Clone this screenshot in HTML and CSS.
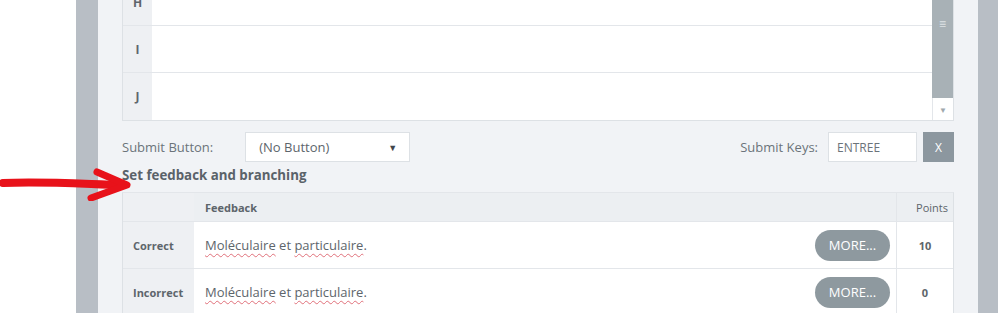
FILE: index.html
```html
<!DOCTYPE html>
<html lang="fr">
<head>
    <meta charset="UTF-8">
    <title>Question properties</title>
    <link rel="stylesheet" href="styles.css">
</head>
<body>
    <div class="stage">
        <div class="band"></div>

        <div class="panel">
            <!-- answer grid -->
            <div class="answers">
                <div class="answer-rows">
                    <div class="answer-row"><span class="letter">H</span><span class="answer-cell"></span></div>
                    <div class="answer-row"><span class="letter">I</span><span class="answer-cell"></span></div>
                    <div class="answer-row"><span class="letter">J</span><span class="answer-cell"></span></div>
                </div>
                <div class="scrollbar">
                    <div class="thumb"><span class="grip">&#8801;</span></div>
                    <div class="scroll-down">&#9660;</div>
                </div>
            </div>

            <!-- submit options -->
            <div class="submit-row">
                <label class="field-label">Submit Button:</label>
                <div class="select">
                    <span>(No Button)</span>
                    <span class="caret">&#9660;</span>
                </div>
                <label class="field-label keys-label">Submit Keys:</label>
                <div class="keys-input">ENTREE</div>
                <button class="clear-btn">X</button>
            </div>

            <h3 class="section-title">Set feedback and branching</h3>

            <!-- feedback table -->
            <div class="feedback">
                <div class="fb-row fb-head">
                    <div class="fb-type"></div>
                    <div class="fb-text">Feedback</div>
                    <div class="fb-points">Points</div>
                </div>
                <div class="fb-row">
                    <div class="fb-type">Correct</div>
                    <div class="fb-text">
                        <span><span class="spell">Moléculaire</span> et <span class="spell">particulaire</span>.</span>
                        <button class="more-btn">MORE...</button>
                    </div>
                    <div class="fb-points">10</div>
                </div>
                <div class="fb-row">
                    <div class="fb-type">Incorrect</div>
                    <div class="fb-text">
                        <span><span class="spell">Moléculaire</span> et <span class="spell">particulaire</span>.</span>
                        <button class="more-btn">MORE...</button>
                    </div>
                    <div class="fb-points">0</div>
                </div>
            </div>
        </div>

        <div class="band"></div>
    </div>

    <svg class="marker" width="140" height="40" viewBox="0 0 140 40">
        <path d="M3 22 C40 20 85 23 122 24" fill="none" stroke="#e8121a" stroke-width="8" stroke-linecap="round"/>
        <path d="M97 11 L127 24 L91 37" fill="none" stroke="#e8121a" stroke-width="7" stroke-linecap="round" stroke-linejoin="round"/>
    </svg>
</body>
</html>
```

FILE: styles.css
```css
* {
    margin: 0;
    padding: 0;
    box-sizing: border-box;
}

body {
    background-color: #fff;
    font-family: 'Open Sans', 'Noto Sans', sans-serif;
    color: #5d656b;
    overflow: hidden;
    height: 313px;
}

.stage {
    display: flex;
    margin-left: 76px;
    height: 313px;
}

.band {
    width: 22px;
    background-color: #b8bec5;
}

.stage .band:last-child {
    width: 20px;
}

.panel {
    flex: 1;
    background-color: #f1f3f6;
    padding: 0 24px;
}

/* Answer grid */
.answers {
    display: flex;
    margin-top: -21px;
    border: 1px solid #dde1e5;
    border-top: none;
    background-color: #fff;
}

.answer-rows {
    flex: 1;
}

.answer-row {
    display: flex;
    height: 47px;
    border-bottom: 1px solid #e3e6ea;
}

.answer-row:last-child {
    border-bottom: none;
}

.letter {
    width: 29px;
    background-color: #eef0f3;
    display: flex;
    align-items: center;
    justify-content: center;
    font-size: 12px;
    font-weight: bold;
    color: #5d656b;
}

.answer-cell {
    flex: 1;
}

.scrollbar {
    width: 21px;
    display: flex;
    flex-direction: column;
}

.thumb {
    flex: 1;
    background-color: #a8b1b6;
    display: flex;
    justify-content: center;
    padding-top: 36px;
    color: #dfe3e6;
    font-size: 12px;
}

.scroll-down {
    height: 22px;
    border-left: 1px solid #e3e6ea;
    display: flex;
    align-items: center;
    justify-content: center;
    font-size: 8px;
    color: #a0a8ad;
}

/* Submit options */
.submit-row {
    display: flex;
    align-items: center;
    height: 30px;
    margin-top: 11px;
}

.field-label {
    font-size: 13px;
    color: #6b737a;
}

.select {
    width: 165px;
    height: 30px;
    margin-left: 32px;
    background-color: #fff;
    border: 1px solid #dde1e5;
    display: flex;
    align-items: center;
    justify-content: space-between;
    padding: 0 12px 0 13px;
    font-size: 13px;
    color: #5d656b;
}

.caret {
    font-size: 9px;
    color: #3f464c;
}

.keys-label {
    margin-left: auto;
}

.keys-input {
    width: 89px;
    height: 30px;
    margin-left: 10px;
    background-color: #fff;
    border: 1px solid #dde1e5;
    display: flex;
    align-items: center;
    padding-left: 8px;
    font-size: 12px;
    color: #6b737a;
}

.clear-btn {
    width: 31px;
    height: 30px;
    margin-left: 6px;
    border: none;
    background-color: #8c979f;
    color: #fff;
    font-family: inherit;
    font-size: 12px;
}

.section-title {
    font-size: 13.3px;
    font-weight: bold;
    color: #5a6269;
    margin-top: 4px;
    line-height: 18px;
}

/* Feedback table */
.feedback {
    margin-top: 8px;
    border-left: 1px solid #dde1e5;
    border-right: 1px solid #dde1e5;
    border-top: 1px solid #e3e6ea;
}

.fb-row {
    display: flex;
    height: 47px;
    border-bottom: 1px solid #e3e6ea;
    background-color: #fff;
}

.fb-head {
    height: 29px;
    background-color: #eceff2;
    font-size: 11px;
    font-weight: bold;
}

.fb-type {
    width: 71px;
    background-color: #eef0f3;
    display: flex;
    align-items: center;
    padding-left: 10px;
    font-size: 11px;
    font-weight: bold;
    color: #5d656b;
}

.fb-text {
    flex: 1;
    display: flex;
    align-items: center;
    justify-content: space-between;
    padding: 0 6px 0 11px;
    font-size: 13px;
    color: #5d656b;
    border-right: 1px solid #e3e6ea;
}

.fb-head .fb-text {
    font-size: 11px;
}

.spell {
    text-decoration: underline wavy #e0707a;
    text-decoration-thickness: 1px;
    text-underline-offset: 3px;
}

.fb-points {
    width: 56px;
    display: flex;
    align-items: center;
    justify-content: center;
    font-size: 11px;
    font-weight: bold;
}

.fb-head .fb-points {
    justify-content: flex-end;
    padding-right: 5px;
    font-weight: normal;
}

.more-btn {
    width: 75px;
    height: 31px;
    border: none;
    border-radius: 16px;
    background-color: #8e999f;
    color: #fff;
    font-family: inherit;
    font-size: 13px;
}

/* Red marker over the screenshot */
.marker {
    position: absolute;
    left: 0;
    top: 161px;
}
```
